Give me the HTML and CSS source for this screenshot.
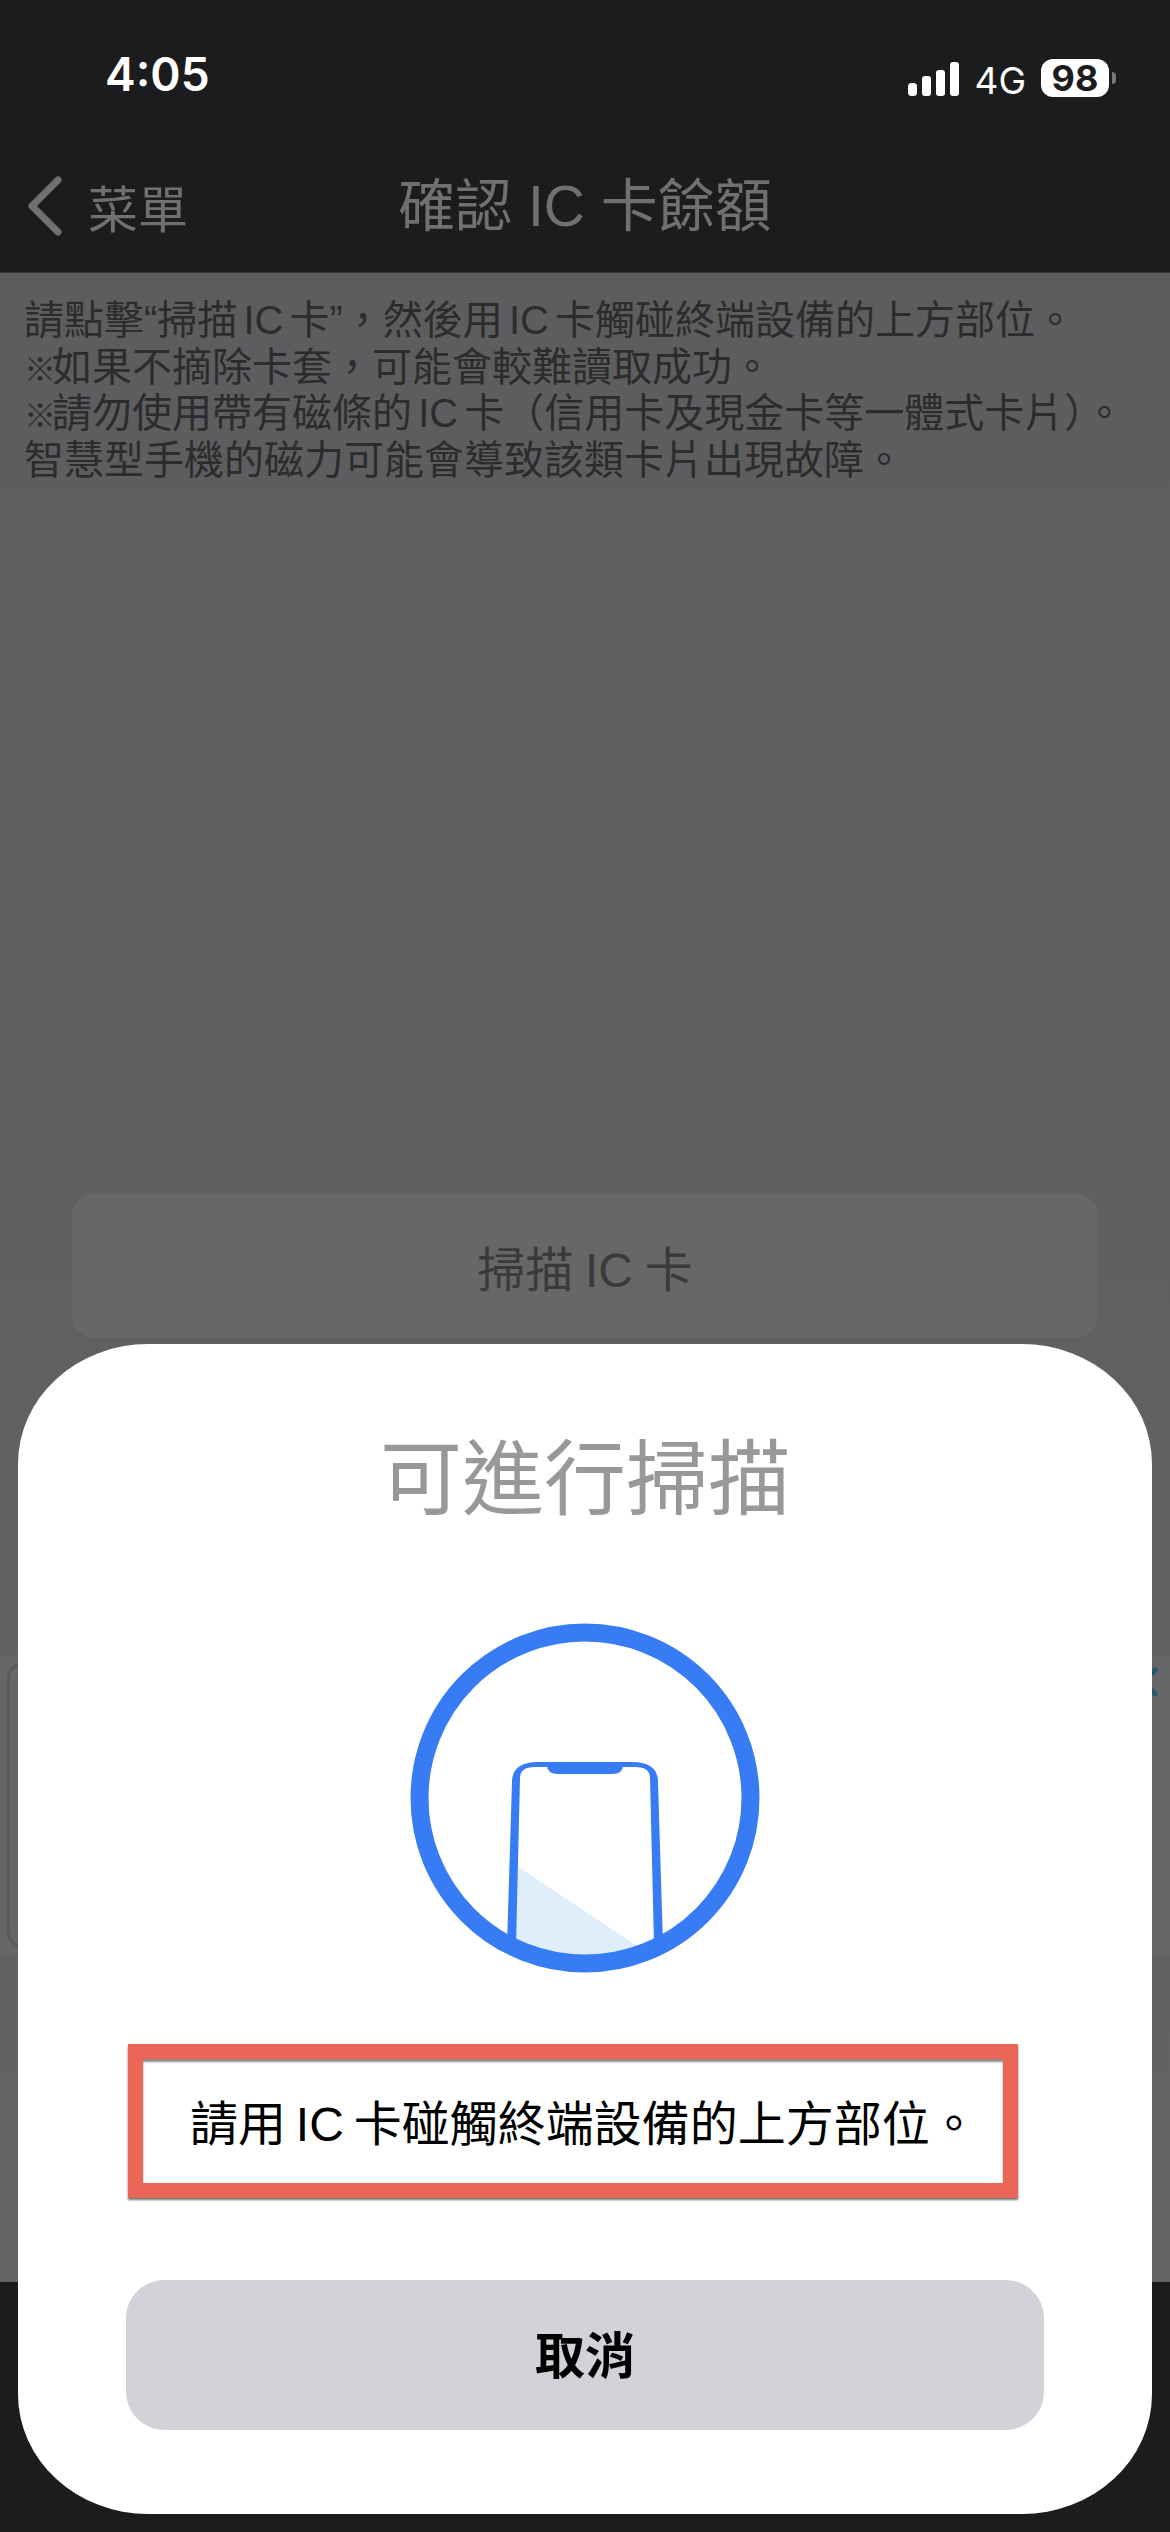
FILE: index.html
```html
<!DOCTYPE html>
<html lang="zh-Hant">
<head>
<meta charset="utf-8">
<title>確認 IC 卡餘額</title>
<link rel="stylesheet" href="styles.css">
</head>
<body>
<div class="app">
  <header class="top">
    <div class="status">
      <span class="time">4:05</span>
      <div class="status-right">
        <svg class="signal" width="51" height="34" viewBox="0 0 51 34"><rect x="0" y="21" width="9" height="13" rx="3.5"/><rect x="14" y="14" width="9" height="20" rx="3"/><rect x="28" y="8" width="9" height="26" rx="3"/><rect x="42" y="0" width="9" height="34" rx="3"/></svg>
        <span class="net">4G</span>
        <span class="battery">98</span>
        <span class="battery-tip"></span>
      </div>
    </div>
    <nav class="nav">
      <div class="back">
        <svg class="chev" width="37" height="60" viewBox="0 0 37 60"><path d="M32 4 L6 30 L32 56" fill="none" stroke="#707071" stroke-width="7" stroke-linecap="round" stroke-linejoin="round"/></svg>
        <span>菜單</span>
      </div>
      <h1 class="title">確認 IC 卡餘額</h1>
      <div></div>
    </nav>
  </header>
  <main class="page">
    <div class="notes">
      <p>請點擊“掃描 IC 卡”，然後用 IC 卡觸碰終端設備的上方部位。</p>
      <p><span class="mark">※</span>如果不摘除卡套，可能會較難讀取成功。</p>
      <p><span class="mark">※</span>請勿使用帶有磁條的 IC 卡（信用卡及現金卡等一體式卡片）。</p>
      <p>智慧型手機的磁力可能會導致該類卡片出現故障。</p>
    </div>
    <button class="scan">掃描 IC 卡</button>
    <section class="band">
      <div class="ghost-card"></div>
      <svg class="ghost-chev" width="20" height="30" viewBox="0 0 20 30"><path d="M17 3 L5 15 L17 27" fill="none" stroke="#1f5a6e" stroke-width="5" stroke-linecap="round"/></svg>
    </section>
  </main>
  <footer class="bottom"></footer>
  <aside class="sheet">
    <h2 class="sheet-title">可進行掃描</h2>
    <svg class="nfc" width="350" height="352" viewBox="410 1622 350 352">
      <path d="M514 1864 L640 1948 L600 1970 L514 1955 Z" fill="#e0eefc"/>
      <path fill-rule="evenodd" d="M507 1945 L512 1782 Q512 1762 538 1762 L632 1762 Q658 1762 658 1782 L663 1945 Z M516 1945 L520 1778 Q520 1767 535 1767 L635 1767 Q650 1767 650 1778 L654 1945 Z" fill="#377bf5"/>
      <path d="M547 1765 L623 1765 Q623 1774 612 1774 L558 1774 Q547 1774 547 1765 Z" fill="#377bf5"/>
      <circle cx="585" cy="1798" r="165.5" fill="none" stroke="#377bf5" stroke-width="18"/>
    </svg>
    <div class="prompt">請用 IC 卡碰觸終端設備的上方部位。</div>
    <button class="cancel">取消</button>
  </aside>
</div>
</body>
</html>
```

FILE: styles.css
```css
* { box-sizing: border-box; }
html, body { margin: 0; padding: 0; }
body { background: #1c1c1e; font-family: "Liberation Sans", "Noto Sans CJK TC", sans-serif; }
.app { position: relative; width: 1170px; height: 2532px; display: flex; flex-direction: column; overflow: hidden; }

.top { height: 273px; background: #1c1c1e; border-bottom: 1px solid #3a3a3c; flex: none; }
.status { height: 136px; display: flex; justify-content: space-between; align-items: flex-start; padding: 51px 54px 0 105px; }
.time { font-family: Inter, sans-serif; font-weight: 600; font-size: 46px; line-height: 46px; color: #fff; }
.status-right { display: flex; align-items: center; margin-top: 4px; }
.signal { fill: #fff; margin-top: 2px; }
.net { font-family: Inter, sans-serif; font-size: 37px; line-height: 38px; color: #fff; margin-left: 15px; margin-top: 7px; }
.battery { font-family: Inter, sans-serif; font-weight: 700; font-size: 36px; line-height: 38px; color: #1c1c1e; background: #fff; border-radius: 12px; width: 68px; text-align: center; margin-left: 15px; }
.battery-tip { width: 4px; height: 12px; background: #777; border-radius: 0 4px 4px 0; margin-left: 3px; }

.nav { display: grid; grid-template-columns: 1fr auto 1fr; align-items: center; height: 136px; padding-top: 4px; color: #707071; }
.back { display: flex; align-items: center; font-size: 50px; padding-left: 26px; gap: 25px; }
.title { margin: 0; font-size: 57px; font-weight: 400; line-height: 70px; }

.page { flex: none; height: 2009px; background: linear-gradient(#5d5d5f, #636365); color: #2c2c2c; overflow: hidden; }
.notes { padding: 24px 0 0 24px; font-size: 40px; line-height: 46.7px; height: 211px; white-space: nowrap; word-spacing: -5px; }
.notes p { margin: 0; height: 46.7px; }
.mark { font-size: 32px; line-height: 0; margin-right: -4px; vertical-align: 0; }

.scan { display: block; width: 1026px; height: 144px; margin: 710px 0 0 72px; border: 0; border-radius: 22px; background: #676768; color: #3a3a3a; font: inherit; font-size: 48px; word-spacing: -1.5px; }

.band { display: flex; align-items: flex-start; margin-top: 317px; height: 300px; padding: 7px 12px 7px 7px; background: #666668; }
.ghost-card { flex: 1; height: 286px; border: 3px solid #5a5a5c; border-radius: 16px; }
.ghost-chev { margin-top: 5px; flex: none; }

.bottom { flex: 1; background: #1c1c1e; }

.sheet { position: absolute; left: 18px; top: 1344px; width: 1134px; height: 1170px; background: #fff; border-radius: 130px / 120px; display: flex; flex-direction: column; align-items: center; padding-top: 86px; }
.sheet-title { margin: 0; font-size: 82px; font-weight: 400; line-height: 100px; color: #989898; }
.nfc { display: block; margin-top: 92px; flex: none; }
.prompt { align-self: flex-start; margin: 70px 0 0 110px; width: 890px; height: 154px; border: 15px solid #ec6657; box-shadow: 0 2px 2px rgba(0,0,0,.55), inset 0 3px 2px rgba(0,0,0,.45); padding-left: 47px; font-size: 48px; word-spacing: -3.5px; line-height: 132px; color: #000; white-space: nowrap; background: #fff; }
.cancel { width: 918px; height: 150px; margin-top: 82px; padding: 0 0 6px; border: 0; border-radius: 38px; background: #d2d2d9; color: #000; font: inherit; font-size: 50px; font-weight: 700; }
```
